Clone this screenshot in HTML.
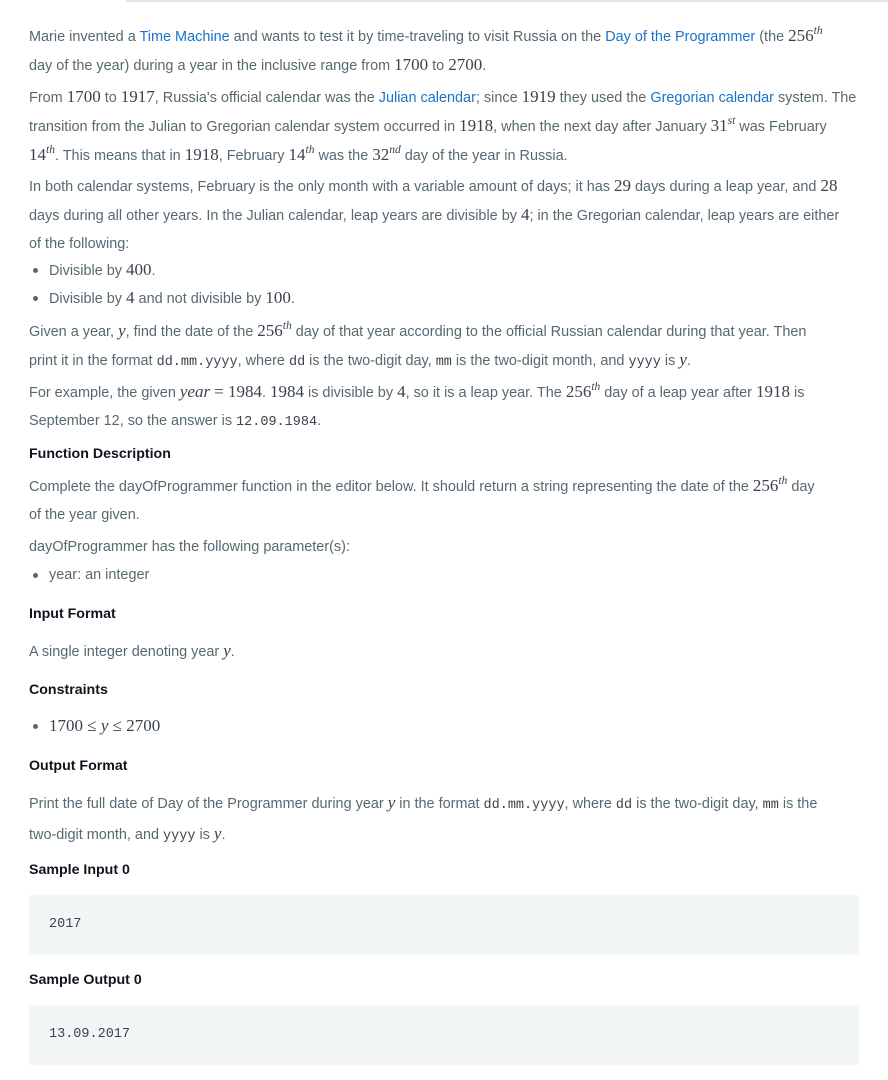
<!DOCTYPE html>
<html><head><meta charset="utf-8"><style>
body{margin:0;width:888px;height:1080px;background:#fff;position:relative;overflow:hidden;font-family:"Liberation Sans",sans-serif;font-size:14.45px;color:#576871}
.topbar{position:absolute;left:126px;top:0;width:762px;height:2px;background:#e3e6e8}
.l{position:absolute;left:29px;white-space:nowrap;line-height:28px}
a{color:#1a73c8;text-decoration:none}
.m{font-family:"Liberation Serif",serif;font-size:17px;color:#39424e}
.m sup{font-style:italic;font-size:11.5px;vertical-align:7px;line-height:0}
i.v{font-family:"Liberation Serif",serif;font-size:17px;color:#39424e}
code{font-family:"Liberation Mono",monospace;font-size:13.5px;color:#39424e}
.h{font-weight:bold;color:#0e141e;font-size:14.2px}
.b{padding-left:20px;position:absolute;left:29px;line-height:28px;white-space:nowrap}
.b:before{content:"";position:absolute;left:4px;top:12px;width:5px;height:5px;border-radius:50%;background:#576871}
.box{position:absolute;left:29px;width:830px;height:60px;background:#f3f6f7;font-family:"Liberation Mono",monospace;font-size:13.5px;color:#39424e;line-height:60px;text-indent:20px}
</style></head><body>
<div class="topbar"></div>
<div class="l" style="top:22px">Marie invented a <a>Time Machine</a> and wants to test it by time-traveling to visit Russia on the <a>Day of the Programmer</a> (the <span class="m">256<sup>th</sup></span><br>day of the year) during a year in the inclusive range from <span class="m">1700</span> to <span class="m">2700</span>.</div>
<div class="l" style="top:83px">From <span class="m">1700</span> to <span class="m">1917</span>, Russia's official calendar was the <a>Julian calendar</a>; since <span class="m">1919</span> they used the <a>Gregorian calendar</a> system. The<br>transition from the Julian to Gregorian calendar system occurred in <span class="m">1918</span>, when the next day after January <span class="m">31<sup>st</sup></span> was February<br><span class="m">14<sup>th</sup></span>. This means that in <span class="m">1918</span>, February <span class="m">14<sup>th</sup></span> was the <span class="m">32<sup>nd</sup></span> day of the year in Russia.</div>
<div class="l" style="top:172px">In both calendar systems, February is the only month with a variable amount of days; it has <span class="m">29</span> days during a leap year, and <span class="m">28</span><br>days during all other years. In the Julian calendar, leap years are divisible by <span class="m">4</span>; in the Gregorian calendar, leap years are either<br>of the following:</div>
<div class="b" style="top:256px">Divisible by <span class="m">400</span>.</div>
<div class="b" style="top:284px">Divisible by <span class="m">4</span> and not divisible by <span class="m">100</span>.</div>
<div class="l" style="top:317px">Given a year, <i class="v">y</i>, find the date of the <span class="m">256<sup>th</sup></span> day of that year according to the official Russian calendar during that year. Then<br>print it in the format <code>dd.mm.yyyy</code>, where <code>dd</code> is the two-digit day, <code>mm</code> is the two-digit month, and <code>yyyy</code> is <i class="v">y</i>.</div>
<div class="l" style="top:378px">For example, the given <i class="v">year</i> <span class="m">= 1984</span>. <span class="m">1984</span> is divisible by <span class="m">4</span>, so it is a leap year. The <span class="m">256<sup>th</sup></span> day of a leap year after <span class="m">1918</span> is<br>September 12, so the answer is <code>12.09.1984</code>.</div>
<div class="l h" style="top:440px">Function Description</div>
<div class="l" style="top:472px">Complete the dayOfProgrammer function in the editor below. It should return a string representing the date of the <span class="m">256<sup>th</sup></span> day<br>of the year given.</div>
<div class="l" style="top:533px">dayOfProgrammer has the following parameter(s):</div>
<div class="b" style="top:561px">year: an integer</div>
<div class="l h" style="top:600px">Input Format</div>
<div class="l" style="top:637px">A single integer denoting year <i class="v">y</i>.</div>
<div class="l h" style="top:676px">Constraints</div>
<div class="b" style="top:712px"><span class="m">1700 ≤ <i>y</i> ≤ 2700</span></div>
<div class="l h" style="top:752px">Output Format</div>
<div class="l" style="top:789px">Print the full date of Day of the Programmer during year <i class="v">y</i> in the format <code>dd.mm.yyyy</code>, where <code>dd</code> is the two-digit day, <code>mm</code> is the<br>two-digit month, and <code>yyyy</code> is <i class="v">y</i>.</div>
<div class="l h" style="top:856px">Sample Input 0</div>
<div class="box" style="top:895px">2017</div>
<div class="l h" style="top:966px">Sample Output 0</div>
<div class="box" style="top:1005px">13.09.2017</div>
</body></html>
